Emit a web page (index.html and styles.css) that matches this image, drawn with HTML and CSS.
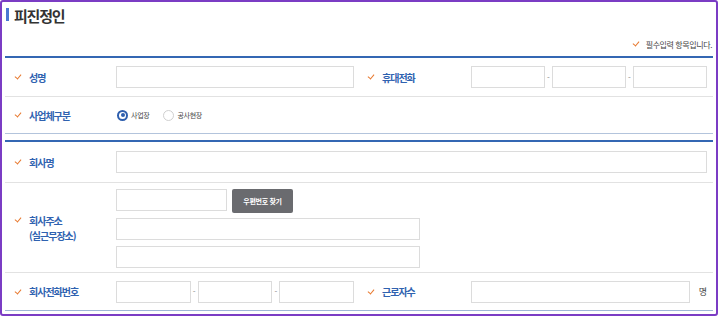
FILE: index.html
```html
<!DOCTYPE html>
<html lang="ko">
<head>
    <meta charset="UTF-8">
    <title>피진정인</title>
    <link rel="stylesheet" href="styles.css">
</head>
<body>
    <div class="frame">
        <h2 class="section-title">피진정인</h2>
        <p class="required-note"><span class="chk"></span>필수입력 항목입니다.</p>

        <div class="form-table">
            <div class="row row-name">
                <div class="label"><span class="chk"></span>성명</div>
                <div class="field"><input type="text" class="w-full"></div>
                <div class="label"><span class="chk"></span>휴대전화</div>
                <div class="field phone">
                    <input type="text"><span class="dash">-</span><input type="text"><span class="dash">-</span><input type="text">
                </div>
            </div>
            <div class="row row-type">
                <div class="label"><span class="chk"></span>사업체구분</div>
                <div class="field span-3">
                    <label class="radio"><span class="dot checked"></span>사업장</label>
                    <label class="radio"><span class="dot"></span>공사현장</label>
                </div>
            </div>
        </div>

        <div class="form-table second">
            <div class="row row-company">
                <div class="label"><span class="chk"></span>회사명</div>
                <div class="field span-3"><input type="text" class="w-full"></div>
            </div>
            <div class="row row-address">
                <div class="label">
                    <div class="label-multi"><span class="chk"></span><span>회사주소<br>(실근무장소)</span></div>
                </div>
                <div class="field span-3 address">
                    <div class="zip-line">
                        <input type="text" class="zip">
                        <button type="button" class="zip-btn">우편번호 찾기</button>
                    </div>
                    <input type="text" class="addr">
                    <input type="text" class="addr">
                </div>
            </div>
            <div class="row row-phone">
                <div class="label"><span class="chk"></span>회사전화번호</div>
                <div class="field phone">
                    <input type="text"><span class="dash">-</span><input type="text"><span class="dash">-</span><input type="text">
                </div>
                <div class="label"><span class="chk"></span>근로자수</div>
                <div class="field">
                    <input type="text" class="workers"><span class="unit">명</span>
                </div>
            </div>
        </div>
    </div>
</body>
</html>
```

FILE: styles.css
```css
:root {
    --frame-color: #7b3cc4;
    --line-blue: #3467b3;
    --label-blue: #2f62b0;
    --check-color: #e87a30;
    --input-border: #dcdcdc;
}

* {
    margin: 0;
    padding: 0;
    box-sizing: border-box;
}

body {
    font-family: "Noto Sans CJK KR", "Noto Sans", sans-serif;
    color: #333;
    background: #fff;
}

.frame {
    width: 718px;
    height: 316px;
    border: 2px solid var(--frame-color);
    border-radius: 3px;
    padding: 0 3px;
    overflow: hidden;
}

.section-title {
    display: flex;
    align-items: center;
    height: 22px;
    margin-top: 2px;
    padding-left: 9px;
    position: relative;
    font-size: 15px;
    font-weight: 700;
    letter-spacing: -1.2px;
    color: #333;
}

.section-title::before {
    content: '';
    position: absolute;
    left: 1px;
    top: 4px;
    width: 3px;
    height: 13px;
    background-color: #4a78d2;
}

.required-note {
    display: flex;
    align-items: center;
    justify-content: flex-end;
    height: 12px;
    margin-top: 12px;
    margin-bottom: 6px;
    padding-right: 1px;
    font-size: 8px;
    letter-spacing: -0.4px;
    color: #444;
}

.required-note .chk {
    margin-right: 7px;
}

.chk {
    display: inline-block;
    width: 6px;
    height: 4px;
    border-left: 1.5px solid var(--check-color);
    border-bottom: 1.5px solid var(--check-color);
    transform: rotate(-50deg);
    margin-top: -2px;
    flex-shrink: 0;
}

.form-table {
    border-top: 2px solid var(--line-blue);
    border-bottom: 1px solid #b3c4dc;
}

.form-table.second {
    margin-top: 6px;
    border-bottom-color: #9fb6d6;
}

.row {
    display: grid;
    grid-template-columns: 105px 250px 105px minmax(0, 1fr);
    border-bottom: 1px solid #e2e2e2;
}

.row:last-child {
    border-bottom: none;
}

.row-name { height: 39px; }
.row-type { height: 36px; }
.row-company { height: 41px; }
.row-address { height: 90px; }
.row-phone { height: 37px; }

.label {
    display: flex;
    align-items: center;
    gap: 8px;
    padding-left: 10px;
    font-size: 10px;
    font-weight: 700;
    letter-spacing: -1px;
    line-height: 15px;
    color: var(--label-blue);
}

.label-multi {
    display: flex;
    align-items: flex-start;
    gap: 8px;
}

.label-multi .chk {
    margin-top: 4px;
}

.row .label:nth-child(3) {
    padding-left: 8px;
}

.field {
    display: flex;
    align-items: center;
    min-width: 0;
    padding: 0 6px;
}

.span-3 {
    grid-column: span 3;
}

input {
    height: 22px;
    border: 1px solid var(--input-border);
    background: #fff;
    font-size: 10px;
    padding: 0 6px;
}

.w-full {
    width: 100%;
}

.phone input {
    flex: 1 1 0;
    width: 0;
    min-width: 0;
}

.dash {
    width: 7px;
    flex: none;
    text-align: center;
    font-size: 8px;
    color: #888;
}

.radio {
    display: flex;
    align-items: center;
    gap: 3px;
    margin-right: 14px;
    font-size: 7px;
    color: #444;
    letter-spacing: -0.3px;
}

.radio:first-child {
    margin-left: 1px;
}

.dot {
    width: 11px;
    height: 11px;
    border: 1px solid #d0d0d0;
    border-radius: 50%;
    background: #fff;
}

.dot.checked {
    border: 2px solid #2e5fae;
    position: relative;
}

.dot.checked::after {
    content: '';
    position: absolute;
    left: 1.5px;
    top: 1.5px;
    width: 4px;
    height: 4px;
    border-radius: 50%;
    background: #2e5fae;
}

.address {
    flex-direction: column;
    align-items: flex-start;
    justify-content: flex-start;
    padding-top: 6px;
    gap: 6px;
}

.zip-line {
    display: flex;
    align-items: flex-start;
    gap: 5px;
    height: 24px;
    margin-bottom: -1px;
}

.zip {
    width: 111px;
}

.zip-btn {
    width: 61px;
    height: 24px;
    border: none;
    border-radius: 2px;
    background-color: #6a6b6f;
    color: #fff;
    font-family: inherit;
    font-size: 7px;
    font-weight: 700;
    letter-spacing: -0.3px;
}

.addr {
    width: 304px;
}

.workers {
    width: 220px;
}

.unit {
    margin-left: 9px;
    font-size: 9px;
    color: #444;
}
```
